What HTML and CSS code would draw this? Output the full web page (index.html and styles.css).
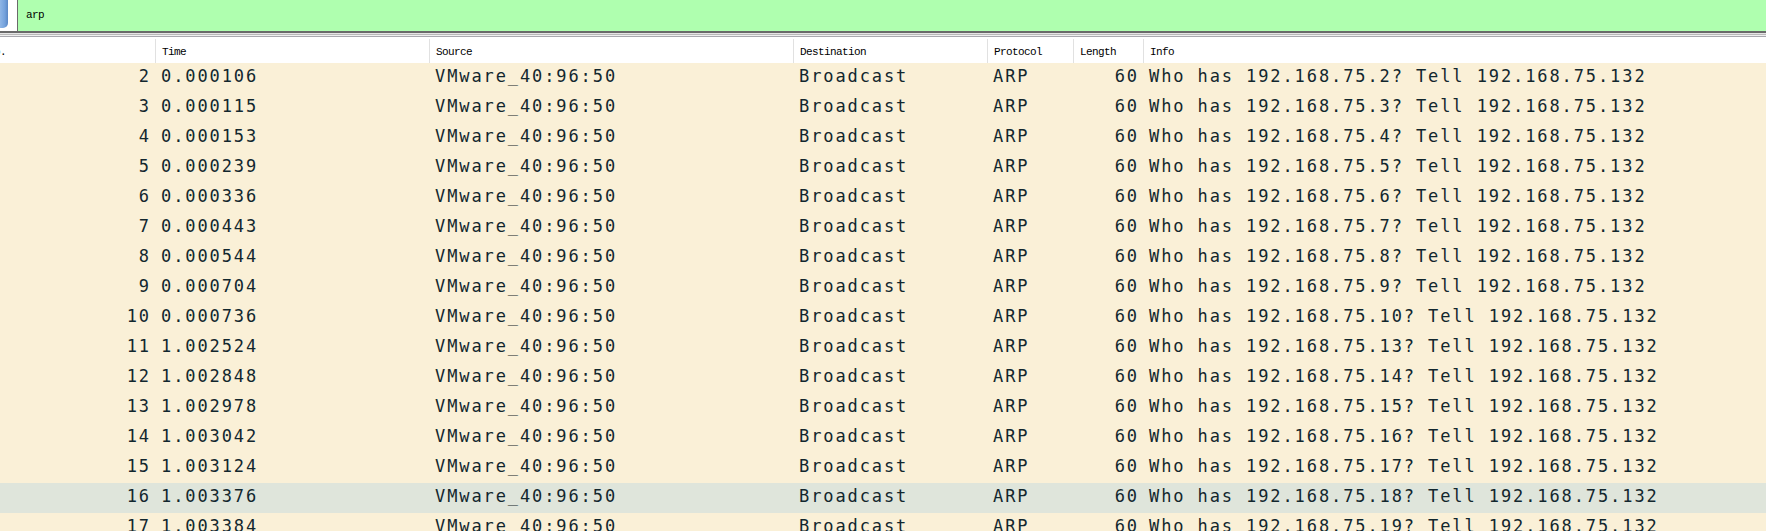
FILE: index.html
```html
<!DOCTYPE html>
<html>
<head>
<meta charset="utf-8">
<title>Wireshark packet list</title>
<link rel="stylesheet" href="styles.css">
</head>
<body>
<div class="app">
  <div class="filterbar">
    <div class="bookmark"></div>
    <div class="gap"></div>
    <div class="filter-input">arp</div>
  </div>
  <div class="rule rule-dark"></div>
  <div class="rule rule-a"></div>
  <div class="rule rule-b"></div>
  <div class="rule rule-c"></div>
  <div class="rule rule-d"></div>
  <div class="header cols">
    <div class="hcell hcell-no"><span class="no-label">No.</span></div>
    <div class="hcell">Time</div>
    <div class="hcell">Source</div>
    <div class="hcell">Destination</div>
    <div class="hcell">Protocol</div>
    <div class="hcell">Length</div>
    <div class="hcell hcell-last">Info</div>
  </div>
  <div class="list" id="list">
    <div class="row cols"><div class="cell r">2</div><div class="cell">0.000106</div><div class="cell">VMware_40:96:50</div><div class="cell">Broadcast</div><div class="cell">ARP</div><div class="cell r">60</div><div class="cell">Who has 192.168.75.2? Tell 192.168.75.132</div></div>
    <div class="row cols"><div class="cell r">3</div><div class="cell">0.000115</div><div class="cell">VMware_40:96:50</div><div class="cell">Broadcast</div><div class="cell">ARP</div><div class="cell r">60</div><div class="cell">Who has 192.168.75.3? Tell 192.168.75.132</div></div>
    <div class="row cols"><div class="cell r">4</div><div class="cell">0.000153</div><div class="cell">VMware_40:96:50</div><div class="cell">Broadcast</div><div class="cell">ARP</div><div class="cell r">60</div><div class="cell">Who has 192.168.75.4? Tell 192.168.75.132</div></div>
    <div class="row cols"><div class="cell r">5</div><div class="cell">0.000239</div><div class="cell">VMware_40:96:50</div><div class="cell">Broadcast</div><div class="cell">ARP</div><div class="cell r">60</div><div class="cell">Who has 192.168.75.5? Tell 192.168.75.132</div></div>
    <div class="row cols"><div class="cell r">6</div><div class="cell">0.000336</div><div class="cell">VMware_40:96:50</div><div class="cell">Broadcast</div><div class="cell">ARP</div><div class="cell r">60</div><div class="cell">Who has 192.168.75.6? Tell 192.168.75.132</div></div>
    <div class="row cols"><div class="cell r">7</div><div class="cell">0.000443</div><div class="cell">VMware_40:96:50</div><div class="cell">Broadcast</div><div class="cell">ARP</div><div class="cell r">60</div><div class="cell">Who has 192.168.75.7? Tell 192.168.75.132</div></div>
    <div class="row cols"><div class="cell r">8</div><div class="cell">0.000544</div><div class="cell">VMware_40:96:50</div><div class="cell">Broadcast</div><div class="cell">ARP</div><div class="cell r">60</div><div class="cell">Who has 192.168.75.8? Tell 192.168.75.132</div></div>
    <div class="row cols"><div class="cell r">9</div><div class="cell">0.000704</div><div class="cell">VMware_40:96:50</div><div class="cell">Broadcast</div><div class="cell">ARP</div><div class="cell r">60</div><div class="cell">Who has 192.168.75.9? Tell 192.168.75.132</div></div>
    <div class="row cols"><div class="cell r">10</div><div class="cell">0.000736</div><div class="cell">VMware_40:96:50</div><div class="cell">Broadcast</div><div class="cell">ARP</div><div class="cell r">60</div><div class="cell">Who has 192.168.75.10? Tell 192.168.75.132</div></div>
    <div class="row cols"><div class="cell r">11</div><div class="cell">1.002524</div><div class="cell">VMware_40:96:50</div><div class="cell">Broadcast</div><div class="cell">ARP</div><div class="cell r">60</div><div class="cell">Who has 192.168.75.13? Tell 192.168.75.132</div></div>
    <div class="row cols"><div class="cell r">12</div><div class="cell">1.002848</div><div class="cell">VMware_40:96:50</div><div class="cell">Broadcast</div><div class="cell">ARP</div><div class="cell r">60</div><div class="cell">Who has 192.168.75.14? Tell 192.168.75.132</div></div>
    <div class="row cols"><div class="cell r">13</div><div class="cell">1.002978</div><div class="cell">VMware_40:96:50</div><div class="cell">Broadcast</div><div class="cell">ARP</div><div class="cell r">60</div><div class="cell">Who has 192.168.75.15? Tell 192.168.75.132</div></div>
    <div class="row cols"><div class="cell r">14</div><div class="cell">1.003042</div><div class="cell">VMware_40:96:50</div><div class="cell">Broadcast</div><div class="cell">ARP</div><div class="cell r">60</div><div class="cell">Who has 192.168.75.16? Tell 192.168.75.132</div></div>
    <div class="row cols"><div class="cell r">15</div><div class="cell">1.003124</div><div class="cell">VMware_40:96:50</div><div class="cell">Broadcast</div><div class="cell">ARP</div><div class="cell r">60</div><div class="cell">Who has 192.168.75.17? Tell 192.168.75.132</div></div>
    <div class="row cols hover"><div class="cell r">16</div><div class="cell">1.003376</div><div class="cell">VMware_40:96:50</div><div class="cell">Broadcast</div><div class="cell">ARP</div><div class="cell r">60</div><div class="cell">Who has 192.168.75.18? Tell 192.168.75.132</div></div>
    <div class="row cols"><div class="cell r">17</div><div class="cell">1.003384</div><div class="cell">VMware_40:96:50</div><div class="cell">Broadcast</div><div class="cell">ARP</div><div class="cell r">60</div><div class="cell">Who has 192.168.75.19? Tell 192.168.75.132</div></div>
  </div>
</div>
</body>
</html>
```
FILE: styles.css
```css
html, body {
  margin: 0;
  padding: 0;
  background: #ffffff;
  overflow: hidden;
}

.app {
  width: 1766px;
  height: 531px;
  overflow: hidden;
  display: flex;
  flex-direction: column;
}

.filterbar {
  display: flex;
  height: 31px;
  flex: none;
  background: #ffffff;
}

.bookmark {
  width: 8px;
  height: 28px;
  border-radius: 0 0 5px 0;
  background: linear-gradient(90deg, #8fb6e6 0%, #74a2dc 60%, #5a87c4 100%);
}

.gap {
  width: 9px;
  background: #ffffff;
}

.filter-input {
  flex: 1;
  background: #afffaf;
  border-left: 1px solid #6a6a6a;
  padding-left: 8px;
  font-family: "Liberation Mono", monospace;
  font-size: 11px;
  letter-spacing: -0.6px;
  color: #000000;
  line-height: 31px;
}

.rule { height: 1px; flex: none; }
.rule-dark { height: 2px; background: #6a6a6a; }
.rule-a { background: #e6e6e6; }
.rule-b { background: #b9b9b9; }
.rule-c { background: #f0f0f0; }
.rule-d { background: #a8a8ae; }

.cols {
  display: grid;
  grid-template-columns: 156px 274px 364px 194px 86px 70px 1fr;
}

.header {
  height: 24px;
  padding-top: 2px;
  flex: none;
  background: #ffffff;
}

.hcell {
  border-right: 1px solid #e1e1e1;
  padding-left: 6px;
  padding-top: 5px;
  font-family: "Liberation Mono", monospace;
  font-size: 11px;
  letter-spacing: -0.6px;
  color: #000000;
  line-height: 17px;
  white-space: nowrap;
  overflow: hidden;
}

.hcell-no { padding-left: 0; }
.no-label { margin-left: -12px; }
.hcell-last { border-right: none; }

.list {
  flex: 1;
  overflow: hidden;
}

.row {
  height: 30px;
  background: #faf0d7;
  color: #12272e;
  font-family: "DejaVu Sans Mono", monospace;
  font-size: 17px;
  letter-spacing: 1.9px;
}

.row.hover { background: #dfe5db; }

.cell {
  padding-left: 5px;
  padding-right: 5px;
  line-height: 27px;
  white-space: nowrap;
  overflow: hidden;
}

.cell.r { text-align: right; }
```
